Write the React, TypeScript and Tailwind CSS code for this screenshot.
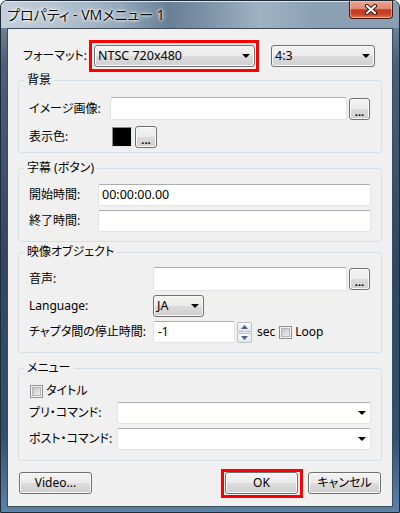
import React from "react";

const Arrow = () => (
  <svg width="8" height="4" viewBox="0 0 8 4" className="shrink-0">
    <path d="M0 0H8L4 4Z" fill="#000" />
  </svg>
);

const btnBase =
  "flex items-center rounded-[3px] border border-[#707070] bg-[linear-gradient(180deg,#f3f3f3_0%,#ebebeb_48%,#dcdcdc_52%,#cfcfcf_100%)] shadow-[inset_0_0_0_1px_#fbfbfb]";
const btnCls = `${btnBase} justify-center`;

const inputCls =
  "bg-white border border-[#dfe3e8] border-t-[#abadb3] rounded-[2px] flex items-center px-[3px]";

function DotsBtn() {
  return (
    <div className={`${btnBase} justify-center w-[21px] h-[22px] shrink-0 !items-end pb-[3px]`}>
      <span className="text-[11px] leading-[8px] font-bold">...</span>
    </div>
  );
}

function DotsBtnWide() {
  return (
    <div className={`${btnBase} justify-center w-[22px] h-[22px] shrink-0 !items-end pb-[3px]`}>
      <span className="text-[11px] leading-[8px] font-bold">...</span>
    </div>
  );
}

function Dropdown({ text, w }: { text: string; w: string }) {
  return (
    <div className={`${btnBase} justify-between ${w} h-[22px] pl-[3px] pr-[4px] shrink-0`}>
      <span className="leading-none text-[12.5px]">{text}</span>
      <Arrow />
    </div>
  );
}

function Combo() {
  return (
    <div className={`${inputCls} w-[254px] h-[22px] justify-end pr-[4px]`}>
      <Arrow />
    </div>
  );
}

function Checkbox() {
  return (
    <div className="w-[13px] h-[13px] shrink-0 border border-[#8e8f8f] bg-[#f4f4f4] p-[1px]">
      <div className="w-full h-full border border-[#b0b5ba] bg-[linear-gradient(135deg,#c3c7cc_0%,#ececec_100%)]" />
    </div>
  );
}

function Group({
  title,
  className,
  children,
}: {
  title: string;
  className: string;
  children: React.ReactNode;
}) {
  return (
    <div className={`relative mx-[10px] border border-[#d5dfe5] rounded-[3px] pl-[10px] ${className}`}>
      <span className="absolute -top-[9px] left-[5px] px-[3px] bg-[#f0f0f0] leading-[16px]">{title}</span>
      {children}
    </div>
  );
}

export default function App() {
  return (
    <div className="w-[400px] h-[513px] bg-white text-[12px] text-black font-['Noto_Sans','Noto_Sans_CJK_JP',sans-serif] [font-feature-settings:'palt']">
      <div className="relative w-[400px] h-[513px] flex flex-col rounded-t-[7px] border border-[#1f2a35] overflow-hidden bg-[linear-gradient(180deg,#8399ad_0%,#4a6279_12%,#2f4760_50%,#32506e_85%,#5d82a8_100%)]">
        {/* Title bar */}
        <div className="h-[27px] shrink-0 flex items-center pl-[6px] bg-[linear-gradient(90deg,#c3cfda_0%,#b3c2cf_15%,#93a8ba_30%,#687f95_42%,#7d93a7_52%,#9fb2c2_65%,#8aa0b3_80%,#8b9fb1_100%)] shadow-[inset_0_1px_0_#dfe7ee]">
          <span className="text-[14px] leading-none text-[#0b0b0b] [text-shadow:0_0_6px_#ffffff,0_0_3px_#ffffff,0_0_2px_#ffffff]">
            プロパティ - VMメニュー 1
          </span>
        </div>
        {/* Close button */}
        <div className="absolute top-0 right-[6px] w-[44px] h-[18px] rounded-b-[4px] border border-t-0 border-[#4a1a12] bg-[linear-gradient(180deg,#eba591_0%,#de8a70_45%,#c43a20_52%,#c9452b_80%,#e67d5a_100%)] shadow-[inset_0_0_0_1px_rgba(255,220,210,0.5)] flex items-center justify-center">
          <svg width="14" height="11" viewBox="0 0 14 11">
            <path d="M3 2L11 9M11 2L3 9" stroke="#3b1a14" strokeWidth="4.2" strokeLinecap="round" />
            <path d="M3 2L11 9M11 2L3 9" stroke="#ffffff" strokeWidth="2.2" strokeLinecap="round" />
          </svg>
        </div>
        {/* Body */}
        <div className="flex-1 px-[6px] pb-[5px]">
          <div className="h-[479px] border border-[#3e4c59] bg-[#f0f0f0] flex flex-col pt-[16px]">
            {/* Format row */}
            <div className="flex items-center h-[22px] pl-[15px]">
              <span className="w-[71px] shrink-0">フォーマット:</span>
              <div className="relative">
                <Dropdown text="NTSC 720x480" w="w-[161px]" />
                <span className="absolute -top-[5px] -bottom-[5px] -left-[5px] -right-[4px] border-[3px] border-[#ff0000] pointer-events-none" />
              </div>
              <div className="ml-[16px]">
                <Dropdown text="4:3" w="w-[104px]" />
              </div>
            </div>

            {/* 背景 */}
            <Group title="背景" className="mt-[13px] pt-[16px] pb-[4px]">
              <div className="flex items-center h-[23px]">
                <span className="w-[81px] shrink-0">イメージ画像:</span>
                <div className={`${inputCls} w-[237px] h-[23px]`} />
                <div className="ml-[2px]">
                  <DotsBtn />
                </div>
              </div>
              <div className="flex items-center h-[22px] mt-[6px]">
                <span className="w-[83px] shrink-0">表示色:</span>
                <div className="w-[20px] h-[20px] border border-[#8a8a8a] border-r-[#e6e6e6] border-b-[#e6e6e6] bg-black" />
                <div className="ml-[3px]">
                  <DotsBtnWide />
                </div>
              </div>
            </Group>

            {/* 字幕 */}
            <Group title="字幕 (ボタン)" className="mt-[15px] pt-[15px] pb-[9px]">
              <div className="flex items-center h-[22px]">
                <span className="w-[69px] shrink-0">開始時間:</span>
                <div className={`${inputCls} w-[273px] h-[22px] text-[12.5px]`}>00:00:00.00</div>
              </div>
              <div className="flex items-center h-[22px] mt-[4px]">
                <span className="w-[69px] shrink-0">終了時間:</span>
                <div className={`${inputCls} w-[273px] h-[22px]`} />
              </div>
            </Group>

            {/* 映像オブジェクト */}
            <Group title="映像オブジェクト" className="mt-[10px] pt-[14px] pb-[9px]">
              <div className="flex items-center h-[24px]">
                <span className="w-[124px] shrink-0">音声:</span>
                <div className={`${inputCls} w-[194px] h-[24px]`} />
                <div className="ml-[2px]">
                  <DotsBtn />
                </div>
              </div>
              <div className="flex items-center h-[22px] mt-[4px]">
                <span className="w-[124px] shrink-0">Language:</span>
                <Dropdown text="JA" w="w-[51px]" />
              </div>
              <div className="flex items-center h-[22px] mt-[4px]">
                <span className="w-[124px] shrink-0">チャプタ間の停止時間:</span>
                <div className={`${inputCls} w-[82px] h-[22px] pl-[4px]`}>-1</div>
                <div className="ml-[2px] w-[15px] h-[21px] flex flex-col gap-[1px]">
                  <div className="h-[10px] border border-[#b9bfc6] rounded-t-[2px] bg-[linear-gradient(180deg,#fafafa,#e4e7ea)] flex items-center justify-center">
                    <svg width="7" height="4" viewBox="0 0 7 4">
                      <path d="M0 4L3.5 0L7 4Z" fill="#4c5f84" />
                    </svg>
                  </div>
                  <div className="h-[10px] border border-[#b9bfc6] rounded-b-[2px] bg-[linear-gradient(180deg,#fafafa,#e4e7ea)] flex items-center justify-center">
                    <svg width="7" height="4" viewBox="0 0 7 4">
                      <path d="M0 0H7L3.5 4Z" fill="#4c5f84" />
                    </svg>
                  </div>
                </div>
                <span className="ml-[5px]">sec</span>
                <div className="ml-[4px]">
                  <Checkbox />
                </div>
                <span className="ml-[3px]">Loop</span>
              </div>
            </Group>

            {/* メニュー */}
            <Group title="メニュー" className="mt-[15px] pt-[14px] pb-[10px]">
              <div className="flex items-center h-[16px]">
                <div className="ml-[1px]">
                  <Checkbox />
                </div>
                <span className="ml-[3px]">タイトル</span>
              </div>
              <div className="flex items-center h-[22px] mt-[3px]">
                <span className="w-[88px] shrink-0">プリ・コマンド:</span>
                <Combo />
              </div>
              <div className="flex items-center h-[22px] mt-[4px]">
                <span className="w-[88px] shrink-0">ポスト・コマンド:</span>
                <Combo />
              </div>
            </Group>

            {/* Buttons */}
            <div className="flex items-center mt-[11px] px-[11px]">
              <div className={`${btnCls} w-[73px] h-[22px]`}>Video...</div>
              <div className="flex-1" />
              <div className="relative">
                <div className={`${btnCls} w-[73px] h-[22px]`}>OK</div>
                <span className="absolute -top-[3px] -bottom-[4px] -left-[4px] -right-[5px] border-[3px] border-[#ff0000] pointer-events-none" />
              </div>
              <div className={`${btnCls} w-[73px] h-[22px] ml-[10px]`}>キャンセル</div>
            </div>
          </div>
        </div>
      </div>
    </div>
  );
}
